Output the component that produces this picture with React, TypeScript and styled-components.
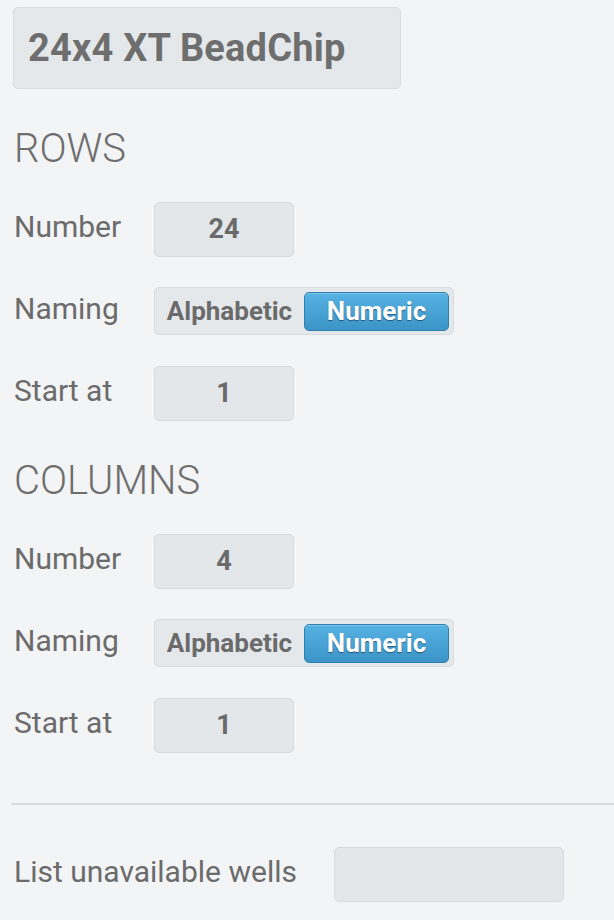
import React from "react";
import styled, { createGlobalStyle } from "styled-components";

const Global = createGlobalStyle`
  html, body { margin: 0; padding: 0; background: #f3f4f6; }
  body { font-family: Roboto, "Open Sans", sans-serif; color: #6d6d6d; }
`;

const Page = styled.div`
  width: 614px;
  height: 920px;
  overflow: hidden;
  box-sizing: border-box;
  padding: 7px 0 0 13px;
`;

const TitleBox = styled.div`
  box-sizing: border-box;
  width: 388px;
  height: 82px;
  margin-bottom: 13px;
  background: #e4e8eb;
  border: 1.5px solid #d6dcdf;
  border-radius: 5px;
  display: flex;
  align-items: center;
  padding-left: 14px;
  font-size: 38px;
  font-weight: 700;
  letter-spacing: 0.2px;
  color: #6e6e6e;
`;

const Section = styled.section`
  display: flex;
  flex-direction: column;
`;

const Heading = styled.h2`
  margin: 0;
  box-sizing: border-box;
  height: 86px;
  padding-top: 7px;
  display: flex;
  align-items: center;
  padding-left: 1px;
  font-size: 40px;
  font-weight: 300;
  color: #6e6e6e;
`;

const Row = styled.div`
  height: 82px;
  display: flex;
  align-items: center;
`;

const Label = styled.span<{ $w?: number }>`
  width: ${(p) => p.$w ?? 140}px;
  font-size: 30px;
  font-weight: 400;
  color: #6b6b6b;
  padding-left: 1px;
  margin-top: -5px;
`;

const Box = styled.div<{ $w: number }>`
  box-sizing: border-box;
  width: ${(p) => p.$w}px;
  height: 55px;
  background: #e3e7ea;
  border: 1.5px solid #d5dbde;
  border-radius: 5px;
  display: flex;
  align-items: center;
  justify-content: center;
  font-size: 27px;
  font-weight: 700;
  color: #6b6b6b;
`;

const Segmented = styled.div`
  box-sizing: border-box;
  width: 300px;
  height: 48px;
  background: #e4e8eb;
  border: 1.5px solid #d6dcdf;
  border-radius: 5px;
  display: flex;
  align-items: center;
  padding: 0 4px 0 0;
`;

const SegOption = styled.div<{ $active?: boolean }>`
  box-sizing: border-box;
  height: ${(p) => (p.$active ? "39px" : "100%")};
  flex: ${(p) => (p.$active ? "0 0 145px" : "1")};
  display: flex;
  align-items: center;
  justify-content: center;
  font-size: 26px;
  font-weight: 700;
  border-radius: 5px;
  color: ${(p) => (p.$active ? "#ffffff" : "#6b6b6b")};
  background: ${(p) =>
    p.$active ? "linear-gradient(#56b2e2, #3c94c7)" : "transparent"};
  border: ${(p) => (p.$active ? "1.5px solid #2f7fae" : "none")};
  text-shadow: ${(p) => (p.$active ? "0 1px 1px rgba(0,0,0,0.45)" : "none")};
  box-shadow: ${(p) =>
    p.$active ? "inset 0 1px 0 rgba(255,255,255,0.25)" : "none"};
`;

const Divider = styled.hr`
  margin: 37px 0 0 -2px;
  border: none;
  border-top: 2px solid #d8dcdf;
`;

const ListRow = styled(Row)`
  height: 138px;
`;

type Axis = { title: string; number: string };

const AxisSection = ({ title, number }: Axis) => (
  <Section>
    <Heading>{title}</Heading>
    <Row>
      <Label>Number</Label>
      <Box $w={140}>{number}</Box>
    </Row>
    <Row>
      <Label>Naming</Label>
      <Segmented>
        <SegOption>Alphabetic</SegOption>
        <SegOption $active>Numeric</SegOption>
      </Segmented>
    </Row>
    <Row>
      <Label>Start at</Label>
      <Box $w={140}>1</Box>
    </Row>
  </Section>
);

export default function App() {
  return (
    <Page>
      <Global />
      <TitleBox>24x4 XT BeadChip</TitleBox>
      <AxisSection title="ROWS" number="24" />
      <AxisSection title="COLUMNS" number="4" />
      <Divider />
      <ListRow>
        <Label $w={320}>List unavailable wells</Label>
        <Box $w={230} />
      </ListRow>
    </Page>
  );
}
